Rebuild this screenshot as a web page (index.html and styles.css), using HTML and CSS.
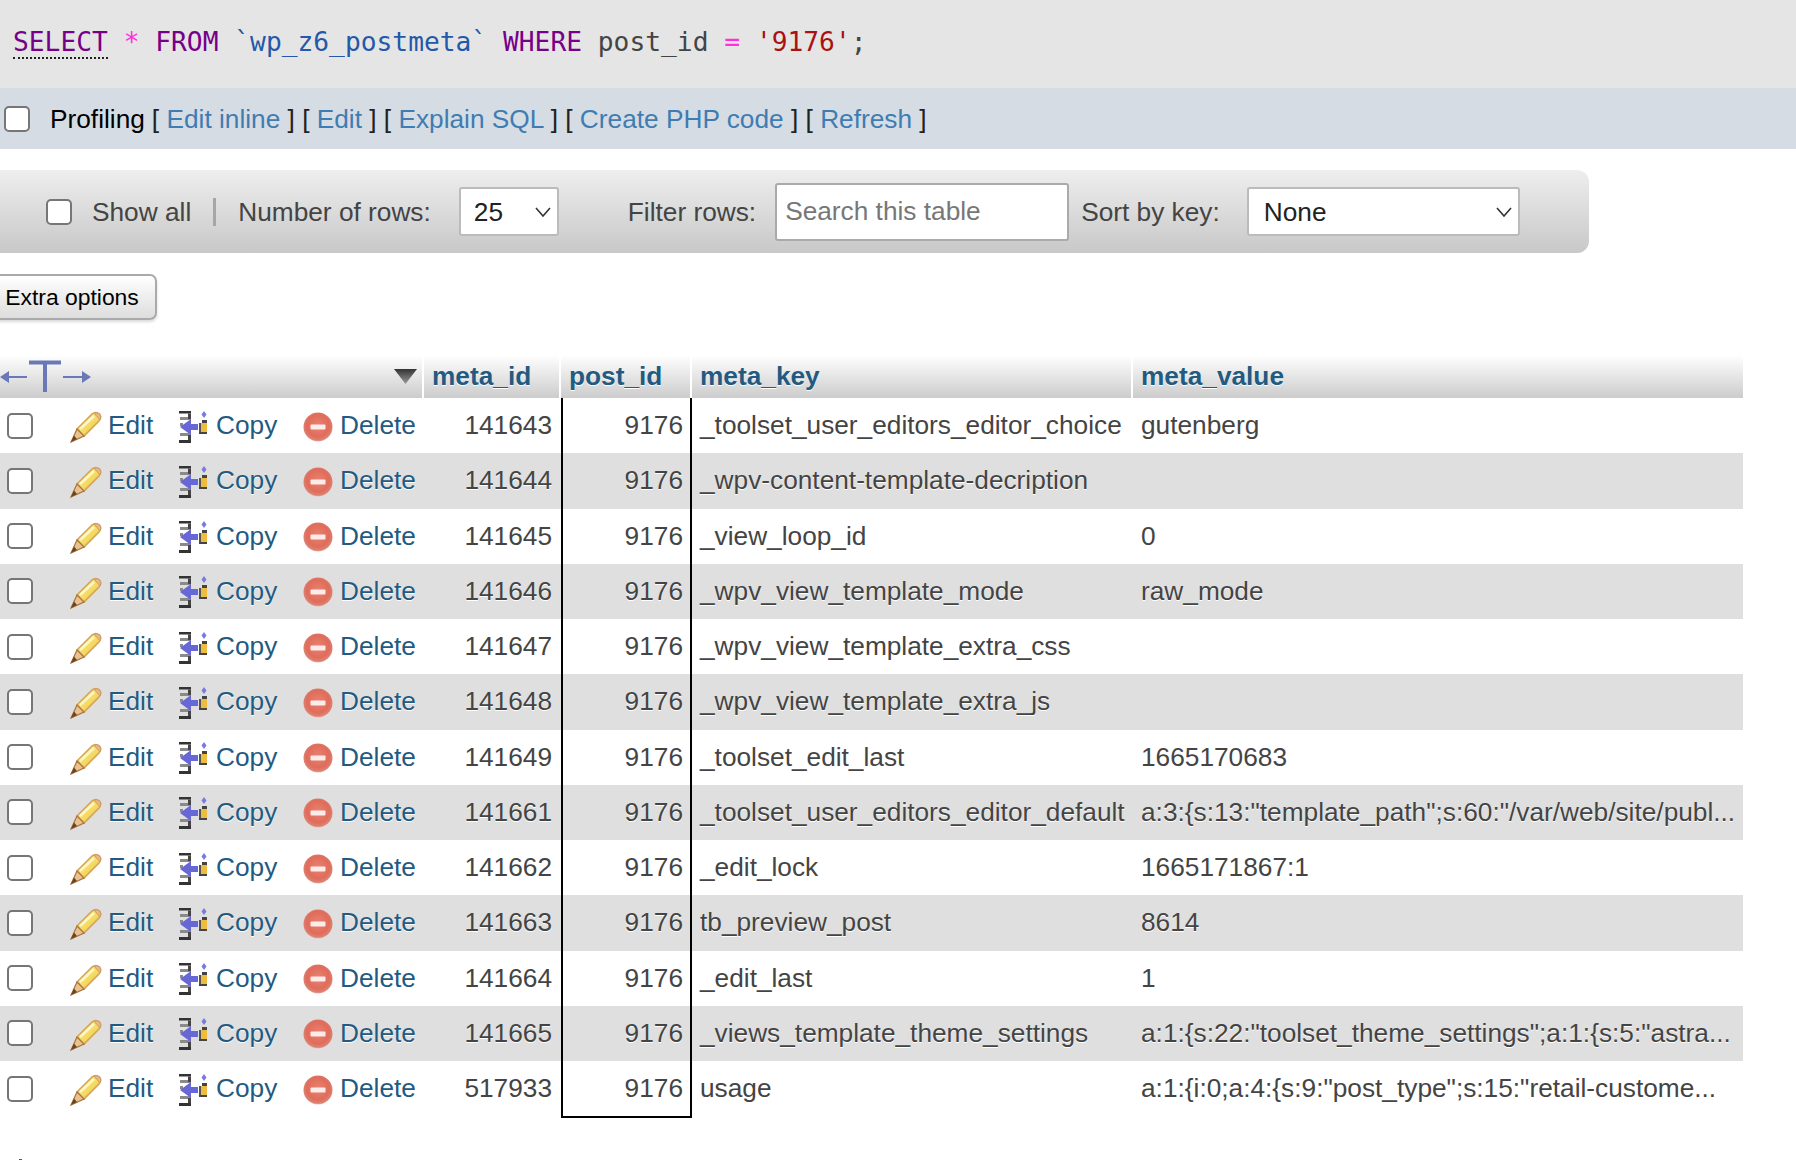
FILE: index.html
```html
<!DOCTYPE html>
<html lang="en">
<head>
    <meta charset="UTF-8">
    <meta name="viewport" content="width=device-width, initial-scale=1.0">
    <title>wp_z6_postmeta</title>
    <link rel="stylesheet" href="styles.css">
</head>
<body>
    <svg class="icon-defs" aria-hidden="true">
        <defs>
            <linearGradient id="pencil-body" x1="0" y1="0" x2="1" y2="1">
                <stop offset="0" stop-color="#fbee9a"/>
                <stop offset="0.55" stop-color="#f4da62"/>
                <stop offset="1" stop-color="#e2b544"/>
            </linearGradient>
            <radialGradient id="delete-fill" cx="0.5" cy="0.45" r="0.55">
                <stop offset="0" stop-color="#e98272"/>
                <stop offset="0.7" stop-color="#e06c5b"/>
                <stop offset="0.92" stop-color="#dd8172"/>
                <stop offset="1" stop-color="#e9b9ae"/>
            </radialGradient>
            <linearGradient id="sort-fill" x1="0" y1="0" x2="0" y2="1">
                <stop offset="0" stop-color="#333"/>
                <stop offset="1" stop-color="#999"/>
            </linearGradient>
            <symbol id="icon-edit" viewBox="0 0 32 32">
                <path d="M7 18 L22 3 Q26 0 29.5 3 Q32 6 29 10 L14 25 Z" fill="url(#pencil-body)" stroke="#d6a454" stroke-width="1.6"/>
                <path d="M10 18 L24 5" stroke="#fdf7c8" stroke-width="2.4" fill="none"/>
                <path d="M24 2 Q27 1 29.5 3 Q32 6 30 9 Z" fill="#e8b98a" stroke="#cd9a62" stroke-width="1"/>
                <path d="M7 18 L14 25 L1 31 Z" fill="#e8c391" stroke="#a9733a" stroke-width="1.2"/>
                <path d="M4 24.5 L7 28 L1 31 Z" fill="#6a4420"/>
            </symbol>
            <symbol id="icon-copy" viewBox="0 0 30 32">
                <path d="M1 0 H13 V2.5 H1 Z M1 29 H13 V32 H1 Z" fill="#333"/>
                <path d="M2 6 H13 V9 H2 Z M2 12 H5 V15 H2 Z M2 22 H13 V25 H2 Z" fill="#8a8a8a"/>
                <path d="M10 2.5 H13 V8 H10 Z M10 24 H13 V29 H10 Z" fill="#444"/>
                <path d="M2 16 L13 8 L13 13 H20 V19 H13 L13 24 Z" fill="#6767d6"/>
                <path d="M24 9 H29 V12 H24 Z M21 21 H29 V23 H21 Z" fill="#444"/>
                <rect x="21" y="12" width="8" height="9" fill="#eebc3e"/>
                <rect x="21" y="12" width="2" height="9" fill="#555"/>
                <path d="M26 0 L28.5 3.5 L26 7 L23.5 3.5 Z" fill="#7a7ae0"/>
            </symbol>
            <symbol id="icon-delete" viewBox="0 0 30 30">
                <circle cx="15" cy="15" r="14.5" fill="url(#delete-fill)"/>
                <rect x="7.5" y="12.5" width="15" height="5" rx="1" fill="#fbecea"/>
            </symbol>
        </defs>
    </svg>

    <div class="sql-box">
        <code class="sql"><span class="kw kw-first">SELECT</span> <span class="op">*</span> <span class="kw">FROM</span> <span class="tbl">`wp_z6_postmeta`</span> <span class="kw">WHERE</span> post_id <span class="op">=</span> <span class="str">'9176'</span>;</code>
    </div>

    <div class="profile-bar">
        <input type="checkbox" class="check">
        <span class="profile-label">Profiling</span>
        <span class="profile-links">[ <a href="#">Edit inline</a> ] [ <a href="#">Edit</a> ] [ <a href="#">Explain SQL</a> ] [ <a href="#">Create PHP code</a> ] [ <a href="#">Refresh</a> ]</span>
    </div>

    <div class="toolbar">
        <input type="checkbox" class="check">
        <span class="show-all">Show all</span>
        <span class="divider"></span>
        <span class="rows-label">Number of rows:</span>
        <div class="select-box rows-select"><span>25</span><svg width="16" height="10" viewBox="0 0 16 10"><path d="M1 1 L8 9 L15 1" fill="none" stroke="#333" stroke-width="1.6"/></svg></div>
        <span class="filter-label">Filter rows:</span>
        <input type="text" class="search" placeholder="Search this table">
        <span class="sort-label">Sort by key:</span>
        <div class="select-box sort-select"><span>None</span><svg width="16" height="10" viewBox="0 0 16 10"><path d="M1 1 L8 9 L15 1" fill="none" stroke="#333" stroke-width="1.6"/></svg></div>
    </div>

    <button class="extra-btn">Extra options</button>

    <table class="results">
        <colgroup>
            <col class="col-check"><col class="col-edit"><col class="col-copy"><col class="col-delete">
            <col class="col-id"><col class="col-post"><col class="col-key"><col class="col-value">
        </colgroup>
        <thead>
            <tr>
                <th colspan="4" class="th-tools">
                    <div class="th-tools-inner">
                        <svg class="t-arrows" width="92" height="36" viewBox="0 0 92 36">
                            <path d="M29 4.5 H61 M45 4.5 V34" stroke="#6a78b8" stroke-width="4" fill="none"/>
                            <path d="M8 19 H27 M63 19 H83" stroke="#6a78b8" stroke-width="2" fill="none"/>
                            <path d="M0 19 L9 13 V25 Z M91 19 L82 13 V25 Z" fill="#6a78b8"/>
                        </svg>
                        <svg width="23" height="15" viewBox="0 0 23 15"><path d="M0 0 H23 L11.5 15 Z" fill="url(#sort-fill)"/></svg>
                    </div>
                </th>
                <th><a href="#">meta_id</a></th>
                <th><a href="#">post_id</a></th>
                <th><a href="#">meta_key</a></th>
                <th class="th-last"><a href="#">meta_value</a></th>
            </tr>
        </thead>
        <tbody>
            <tr>
                <td class="td-check"><input type="checkbox" class="check"></td>
                <td><a class="act" href="#"><svg class="ic-edit"><use href="#icon-edit"/></svg>Edit</a></td>
                <td><a class="act" href="#"><svg class="ic-copy"><use href="#icon-copy"/></svg>Copy</a></td>
                <td><a class="act" href="#"><svg class="ic-del"><use href="#icon-delete"/></svg>Delete</a></td>
                <td class="num">141643</td><td class="num post">9176</td><td>_toolset_user_editors_editor_choice</td><td>gutenberg</td>
            </tr>
            <tr>
                <td class="td-check"><input type="checkbox" class="check"></td>
                <td><a class="act" href="#"><svg class="ic-edit"><use href="#icon-edit"/></svg>Edit</a></td>
                <td><a class="act" href="#"><svg class="ic-copy"><use href="#icon-copy"/></svg>Copy</a></td>
                <td><a class="act" href="#"><svg class="ic-del"><use href="#icon-delete"/></svg>Delete</a></td>
                <td class="num">141644</td><td class="num post">9176</td><td>_wpv-content-template-decription</td><td></td>
            </tr>
            <tr>
                <td class="td-check"><input type="checkbox" class="check"></td>
                <td><a class="act" href="#"><svg class="ic-edit"><use href="#icon-edit"/></svg>Edit</a></td>
                <td><a class="act" href="#"><svg class="ic-copy"><use href="#icon-copy"/></svg>Copy</a></td>
                <td><a class="act" href="#"><svg class="ic-del"><use href="#icon-delete"/></svg>Delete</a></td>
                <td class="num">141645</td><td class="num post">9176</td><td>_view_loop_id</td><td>0</td>
            </tr>
            <tr>
                <td class="td-check"><input type="checkbox" class="check"></td>
                <td><a class="act" href="#"><svg class="ic-edit"><use href="#icon-edit"/></svg>Edit</a></td>
                <td><a class="act" href="#"><svg class="ic-copy"><use href="#icon-copy"/></svg>Copy</a></td>
                <td><a class="act" href="#"><svg class="ic-del"><use href="#icon-delete"/></svg>Delete</a></td>
                <td class="num">141646</td><td class="num post">9176</td><td>_wpv_view_template_mode</td><td>raw_mode</td>
            </tr>
            <tr>
                <td class="td-check"><input type="checkbox" class="check"></td>
                <td><a class="act" href="#"><svg class="ic-edit"><use href="#icon-edit"/></svg>Edit</a></td>
                <td><a class="act" href="#"><svg class="ic-copy"><use href="#icon-copy"/></svg>Copy</a></td>
                <td><a class="act" href="#"><svg class="ic-del"><use href="#icon-delete"/></svg>Delete</a></td>
                <td class="num">141647</td><td class="num post">9176</td><td>_wpv_view_template_extra_css</td><td></td>
            </tr>
            <tr>
                <td class="td-check"><input type="checkbox" class="check"></td>
                <td><a class="act" href="#"><svg class="ic-edit"><use href="#icon-edit"/></svg>Edit</a></td>
                <td><a class="act" href="#"><svg class="ic-copy"><use href="#icon-copy"/></svg>Copy</a></td>
                <td><a class="act" href="#"><svg class="ic-del"><use href="#icon-delete"/></svg>Delete</a></td>
                <td class="num">141648</td><td class="num post">9176</td><td>_wpv_view_template_extra_js</td><td></td>
            </tr>
            <tr>
                <td class="td-check"><input type="checkbox" class="check"></td>
                <td><a class="act" href="#"><svg class="ic-edit"><use href="#icon-edit"/></svg>Edit</a></td>
                <td><a class="act" href="#"><svg class="ic-copy"><use href="#icon-copy"/></svg>Copy</a></td>
                <td><a class="act" href="#"><svg class="ic-del"><use href="#icon-delete"/></svg>Delete</a></td>
                <td class="num">141649</td><td class="num post">9176</td><td>_toolset_edit_last</td><td>1665170683</td>
            </tr>
            <tr>
                <td class="td-check"><input type="checkbox" class="check"></td>
                <td><a class="act" href="#"><svg class="ic-edit"><use href="#icon-edit"/></svg>Edit</a></td>
                <td><a class="act" href="#"><svg class="ic-copy"><use href="#icon-copy"/></svg>Copy</a></td>
                <td><a class="act" href="#"><svg class="ic-del"><use href="#icon-delete"/></svg>Delete</a></td>
                <td class="num">141661</td><td class="num post">9176</td><td>_toolset_user_editors_editor_default</td><td>a:3:{s:13:"template_path";s:60:"/var/web/site/publ...</td>
            </tr>
            <tr>
                <td class="td-check"><input type="checkbox" class="check"></td>
                <td><a class="act" href="#"><svg class="ic-edit"><use href="#icon-edit"/></svg>Edit</a></td>
                <td><a class="act" href="#"><svg class="ic-copy"><use href="#icon-copy"/></svg>Copy</a></td>
                <td><a class="act" href="#"><svg class="ic-del"><use href="#icon-delete"/></svg>Delete</a></td>
                <td class="num">141662</td><td class="num post">9176</td><td>_edit_lock</td><td>1665171867:1</td>
            </tr>
            <tr>
                <td class="td-check"><input type="checkbox" class="check"></td>
                <td><a class="act" href="#"><svg class="ic-edit"><use href="#icon-edit"/></svg>Edit</a></td>
                <td><a class="act" href="#"><svg class="ic-copy"><use href="#icon-copy"/></svg>Copy</a></td>
                <td><a class="act" href="#"><svg class="ic-del"><use href="#icon-delete"/></svg>Delete</a></td>
                <td class="num">141663</td><td class="num post">9176</td><td>tb_preview_post</td><td>8614</td>
            </tr>
            <tr>
                <td class="td-check"><input type="checkbox" class="check"></td>
                <td><a class="act" href="#"><svg class="ic-edit"><use href="#icon-edit"/></svg>Edit</a></td>
                <td><a class="act" href="#"><svg class="ic-copy"><use href="#icon-copy"/></svg>Copy</a></td>
                <td><a class="act" href="#"><svg class="ic-del"><use href="#icon-delete"/></svg>Delete</a></td>
                <td class="num">141664</td><td class="num post">9176</td><td>_edit_last</td><td>1</td>
            </tr>
            <tr>
                <td class="td-check"><input type="checkbox" class="check"></td>
                <td><a class="act" href="#"><svg class="ic-edit"><use href="#icon-edit"/></svg>Edit</a></td>
                <td><a class="act" href="#"><svg class="ic-copy"><use href="#icon-copy"/></svg>Copy</a></td>
                <td><a class="act" href="#"><svg class="ic-del"><use href="#icon-delete"/></svg>Delete</a></td>
                <td class="num">141665</td><td class="num post">9176</td><td>_views_template_theme_settings</td><td>a:1:{s:22:"toolset_theme_settings";a:1:{s:5:"astra...</td>
            </tr>
            <tr class="row-last">
                <td class="td-check"><input type="checkbox" class="check"></td>
                <td><a class="act" href="#"><svg class="ic-edit"><use href="#icon-edit"/></svg>Edit</a></td>
                <td><a class="act" href="#"><svg class="ic-copy"><use href="#icon-copy"/></svg>Copy</a></td>
                <td><a class="act" href="#"><svg class="ic-del"><use href="#icon-delete"/></svg>Delete</a></td>
                <td class="num">517933</td><td class="num post last">9176</td><td>usage</td><td>a:1:{i:0;a:4:{s:9:"post_type";s:15:"retail-custome...</td>
            </tr>
        </tbody>
    </table>

    <div class="bottom-mark"></div>
</body>
</html>
```

FILE: styles.css
```css
* { margin: 0; padding: 0; box-sizing: border-box; }
html, body { height: 1160px; overflow: hidden; }
body { background: #fff; color: #444; font-family: "Liberation Sans", Arial, sans-serif; font-size: 26.25px; }
a { color: #235a81; text-decoration: none; }
.icon-defs { display: block; width: 0; height: 0; }

.check {
    appearance: none;
    display: block;
    flex: none;
    width: 26px;
    height: 26px;
    background: #fff;
    border: 2px solid #767676;
    border-radius: 5px;
}

/* sql query */
.sql-box { height: 88px; background: #e5e5e5; padding: 26px 0 0 13px; }
.sql { display: block; font-family: "DejaVu Sans Mono", "Liberation Mono", monospace; font-size: 26.25px; line-height: 32px; color: #444; white-space: pre; }
.kw { color: #770088; }
.kw-first { border-bottom: 2px dotted #222; }
.op { color: #ff2fe0; }
.tbl { color: #2458a8; }
.str { color: #aa1111; }

/* profiling row */
.profile-bar { display: flex; align-items: center; height: 61px; background: #d5dce4; padding-left: 4px; color: #222; }
.profile-label { margin: 1px 0 0 20px; color: #000; }
.profile-links { margin: 1px 0 0 7px; white-space: pre; }
.profile-links a { color: #3f7cb2; }

/* navigation bar */
.toolbar {
    display: flex;
    align-items: center;
    width: 1589px;
    height: 83px;
    margin-top: 21px;
    padding-left: 46px;
    background: linear-gradient(#eeeeee, #c8c8c8);
    border-radius: 0 12px 12px 0;
}
.show-all, .rows-label, .filter-label, .sort-label { padding-top: 1px; }
.show-all { margin-left: 20px; }
.divider { width: 3px; height: 28px; margin: 0 22px; background: #a6a6a6; }
.select-box {
    display: flex;
    align-items: center;
    justify-content: space-between;
    height: 49px;
    background: #fff;
    border: 2px solid #bbb;
    border-radius: 3px;
    color: #222;
}
.select-box span { padding-top: 1px; }
.select-box svg { flex: none; }
.rows-select { width: 100px; margin-left: 28px; padding: 0 6px 0 13px; }
.filter-label { margin-left: 69px; }
.search {
    width: 294px;
    height: 58px;
    margin-left: 19px;
    padding: 0 8px;
    background: #fff;
    border: 2px solid #aaa;
    border-radius: 3px;
    font: inherit;
    color: #222;
}
.search::placeholder { color: #777; opacity: 1; }
.sort-label { margin-left: 12px; }
.sort-select { width: 273px; margin-left: 27px; padding: 0 6px 0 15px; }

.extra-btn {
    display: block;
    width: 164px;
    height: 46px;
    margin: 21px 0 35px -7px;
    padding: 0 6px 0 0;
    background: linear-gradient(#ffffff, #dddddd);
    border: 2px solid #aaa;
    border-radius: 7px;
    box-shadow: 0 2px 3px rgba(0, 0, 0, 0.15);
    font-family: inherit;
    font-size: 22.9px;
    color: #000;
}

/* results table */
.results { width: 1743px; table-layout: fixed; border-collapse: separate; border-spacing: 0; }
.col-check { width: 64px; }
.col-edit { width: 112px; }
.col-copy { width: 125px; }
.col-delete { width: 123px; }
.col-id { width: 137px; }
.col-post { width: 131px; }
.col-key { width: 441px; }
.col-value { width: 610px; }

.results th {
    height: 43px;
    padding: 0 8px;
    background: linear-gradient(#ffffff, #cccccc);
    border-right: 2px solid #fff;
    text-align: left;
    font-weight: bold;
    text-shadow: 0 1px 0 #fff;
}
.results th.th-last { border-right: 0; }
.results .th-tools { padding: 0 5px 0 0; }
.th-tools-inner { display: flex; align-items: center; justify-content: space-between; }
.t-arrows { margin-bottom: 2px; }

.results tbody tr { height: 55.25px; }
.results tbody tr.row-last { height: 57px; }
.results tbody tr:nth-child(even) td { background: #dfdfdf; text-shadow: 0 1px 0 #fff; }
.results td { padding: 0 8px; white-space: nowrap; overflow: visible; vertical-align: middle; }
.results tr.row-last td { padding-bottom: 2px; }
.results td.td-check { padding-left: 7px; }
.results td.num { text-align: right; padding-right: 9px; }
.results td.post { border-left: 2px solid #000; border-right: 2px solid #000; padding-right: 7px; }
.results tr.row-last td.post { border-bottom: 2px solid #000; padding-bottom: 0; }

.act { display: flex; align-items: center; }
.act svg { flex: none; filter: blur(0.3px); }
.ic-edit { width: 32px; height: 32px; margin: 3px 6px 0 -2px; }
.ic-copy { width: 30px; height: 32px; margin: 2px 8px 0 -6px; }
.ic-del { width: 30px; height: 30px; margin: 2px 7px 0 -6px; }

.bottom-mark { width: 3px; height: 2px; margin: 41px 0 0 19px; background: #555; }
```
